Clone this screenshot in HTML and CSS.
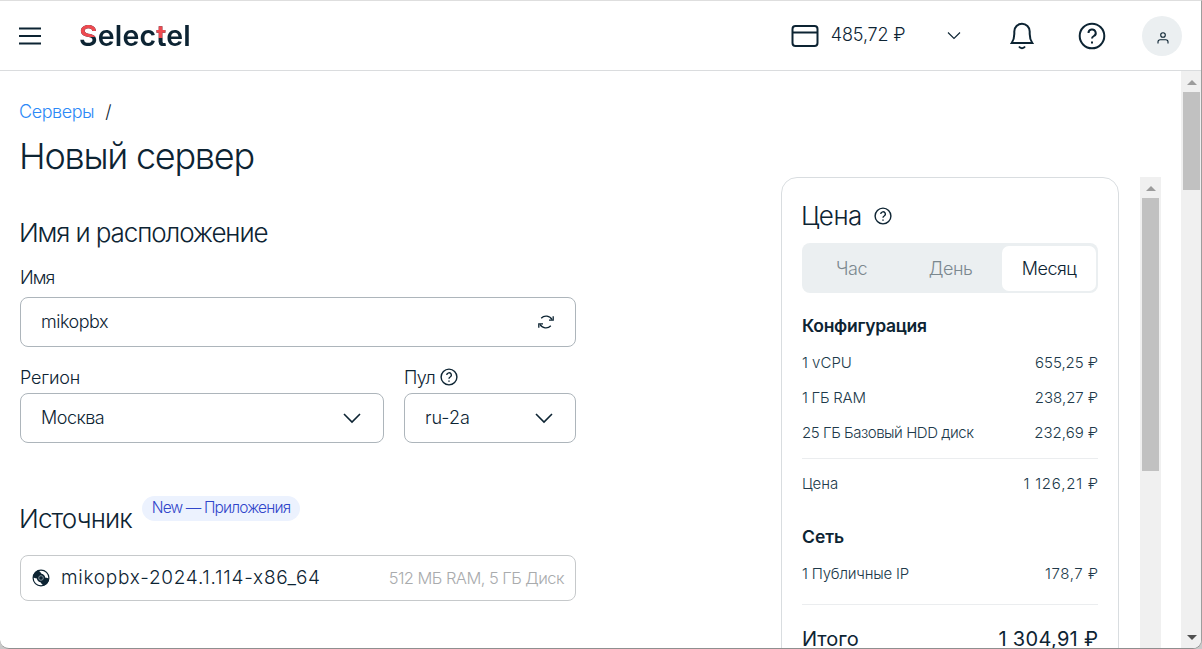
FILE: index.html
```html
<!DOCTYPE html>
<html lang="ru">
<head>
<meta charset="utf-8">
<title>Новый сервер</title>
<link rel="stylesheet" href="styles.css">
</head>
<body>
<svg width="0" height="0" class="defs">
  <symbol id="help" viewBox="0 0 28 28"><circle cx="14" cy="14" r="12.300"/><path d="M10.500 11a3.600 3.500 0 1 1 5.400 3c-1.300.8-1.900 1.300-1.900 2.600"/><path d="M14 19.600v1.900"/></symbol>
  <symbol id="chev" viewBox="0 0 18 12"><path d="M1 2l8 8 8-8"/></symbol>
</svg>
<div class="window">
  <header class="header">
    <svg class="menu" viewBox="0 0 22 18"><path d="M0 1.500h22M0 9h22M0 16.500h22"/></svg>
    <div class="logo">Selec<span class="logo-t">t</span>el</div>
    <div class="balance">
      <svg class="card-icon" viewBox="0 0 28 24"><rect x="1.500" y="2" width="25" height="20" rx="3"/><path d="M1.500 8.500h25"/></svg>
      <span class="sum">485,72 ₽</span>
      <svg class="chev-sm"><use href="#chev"/></svg>
    </div>
    <svg class="bell" viewBox="0 0 24 28"><path d="M4.300 12V9.500a7.700 7.700 0 0 1 15.400 0V12c0 3.500.6 6 2.600 9H1.700c2-3 2.600-5.500 2.600-9z"/><path class="clapper" d="M9 24.500c1.500 2.200 4.500 2.200 6 0"/></svg>
    <svg class="help-lg"><use href="#help"/></svg>
    <div class="avatar"><svg viewBox="0 0 12 12"><circle cx="6" cy="3" r="2.300"/><path d="M1 11.500V9.800Q1 7.700 3.200 7.700H8.800Q11 7.700 11 9.800V11.500"/></svg></div>
  </header>
  <div class="body">
    <main class="main">
      <nav class="crumbs"><a>Серверы</a><span>/</span></nav>
      <h1>Новый сервер</h1>
      <div class="columns">
        <section class="form">
          <h2 class="h-place">Имя и расположение</h2>
          <label class="lbl-name">Имя</label>
          <div class="field">
            <span class="v-name">mikopbx</span>
            <svg class="refresh" viewBox="0 0 16 14"><path d="M3.200 3.200A6.600 6.200 0 0 1 14 4.600M12.800 10.800A6.600 6.200 0 0 1 2 9.400"/><path d="M15.200 1.200v4h-4.200M.8 12.800v-4H5"/></svg>
          </div>
          <div class="selects">
            <div class="region">
              <label class="lbl-region">Регион</label>
              <div class="field"><span class="v-region">Москва</span><svg class="chev"><use href="#chev"/></svg></div>
            </div>
            <div class="pool">
              <label class="lbl-pool">Пул<svg class="help-sm"><use href="#help"/></svg></label>
              <div class="field"><span class="v-pool">ru-2a</span><svg class="chev"><use href="#chev"/></svg></div>
            </div>
          </div>
          <div class="source-head"><h2 class="h-source">Источник</h2><span class="badge">New — Приложения</span></div>
          <div class="source">
            <svg class="disc" viewBox="0 0 18 18"><circle class="rim" cx="9" cy="9" r="7.900"/><path d="M1 8.500A8 8 0 0 1 6.500 1.300L9.500 4.500 4.500 9.500zM17 9.500a8 8 0 0 1-5.500 7.200L8.500 13.500l5-5z"/><circle cx="9" cy="9" r="4.200"/><circle class="ring" cx="9" cy="9" r="2.300"/></svg>
            <span class="v-source">mikopbx-2024.1.114-x86_64</span>
            <span class="spec">512 МБ RAM, 5 ГБ Диск</span>
          </div>
        </section>
        <aside class="price">
          <div class="price-head"><h2>Цена</h2><svg class="help-sm"><use href="#help"/></svg></div>
          <div class="tabs"><span>Час</span><span>День</span><span class="active">Месяц</span></div>
          <h3 class="h-conf">Конфигурация</h3>
          <div class="row"><span class="i-cpu">1 vCPU</span><b>655,25 ₽</b></div>
          <div class="row"><span class="i-ram">1 ГБ RAM</span><b>238,27 ₽</b></div>
          <div class="row"><span class="i-disk">25 ГБ Базовый HDD диск</span><b>232,69 ₽</b></div>
          <div class="row subtotal"><span>Цена</span><b class="wide">1 126,21 ₽</b></div>
          <h3 class="h-net">Сеть</h3>
          <div class="row"><span class="i-ip">1 Публичные IP</span><b class="ip-sum">178,7 ₽</b></div>
          <div class="total"><span>Итого</span><b>1 304,91 ₽</b></div>
        </aside>
        <div class="scroll inner"><i class="up"></i><div class="thumb"></div></div>
      </div>
    </main>
    <div class="scroll outer"><i class="up"></i><div class="thumb"></div><i class="down"></i></div>
  </div>
</div>
</body>
</html>
```
FILE: styles.css
```css
* { box-sizing: border-box; }
body { margin: 0; background: #c9c9c9; font-family: Inter, "Open Sans", sans-serif; font-weight: 300; color: #0d2433; overflow: hidden; }
h1, h2, h3 { margin: 0; font-weight: 300; white-space: nowrap; }
span, b, a, label { white-space: nowrap; }
b { font-weight: 300; }
svg { flex: none; fill: none; stroke: #0d2433; stroke-width: 2; display: block; }
.defs { position: absolute; }
.window { width: 1202px; height: 649px; background: #fff; border-top: 1px solid #dedede; border-right: 1px solid #9d9d9d; border-bottom: 1px solid #8f8f8f; border-radius: 0 0 9px 9px; overflow: hidden; display: flex; flex-direction: column; }

.header { flex: none; height: 70px; border-bottom: 1px solid #dadcde; display: flex; align-items: center; padding: 0 19px 0 19px; }
.menu { width: 22px; height: 18px; stroke-width: 2; }
.logo { margin-left: 38px; width: 113px; font-size: 28.5px; font-weight: 600; letter-spacing: .2px; line-height: 30px; padding-top: 1px; color: transparent; -webkit-background-clip: text; background-clip: text; background-image: linear-gradient(168deg, transparent 62%, #fff 62% 67%, transparent 67%), linear-gradient(#ee4a50 0 0), linear-gradient(#0d2433, #0d2433); background-size: 0 0, 18px 17px, 100% 100%; background-repeat: no-repeat; }
.logo-t { background: linear-gradient(#ee4a50 57%, #0d2433 57%); -webkit-background-clip: text; background-clip: text; }
.balance { margin-left: 599px; display: flex; align-items: center; width: 171px; }
.card-icon { width: 28px; height: 24px; }
.sum { margin-left: 12px; width: 116px; font-size: 18px; line-height: 22px; letter-spacing: -.1px; padding-bottom: 2px; }
.chev-sm { width: 14px; height: 9px; stroke-width: 1.5; }
.bell { margin-left: 49px; width: 24px; height: 28px; }
.help-lg { margin-left: 44px; width: 28px; height: 28px; }
.avatar { margin-left: 36px; width: 40px; height: 40px; border-radius: 50%; background: #ebeff1; display: grid; place-items: center; }
.avatar svg { width: 12px; height: 12px; stroke-width: 1.1; margin-top: 4px; margin-left: 1px; }

.body { flex: 1; min-height: 0; display: flex; }
.main { width: 1181px; padding: 30px 20px 0; }
.crumbs { display: flex; gap: 11px; font-size: 18px; line-height: 22px; margin-left: -1px; }
.crumbs a { color: #2c89f7; letter-spacing: -.45px; }
h1 { font-size: 36px; line-height: 43px; margin: 12px 0 -1px -1px; letter-spacing: -1.25px; }
.columns { display: flex; height: 472px; }
.form { width: 556px; padding-top: 40px; }
h2 { font-size: 26px; line-height: 32px; }
.h-place { margin-left: -1px; letter-spacing: -1.12px; }
.price-head h2 { letter-spacing: -.5px; margin-left: -1px; }
label { display: flex; align-items: center; gap: 5px; font-size: 18px; line-height: 22px; }
.lbl-name { margin-top: 18px; letter-spacing: -1px; }
.lbl-region { letter-spacing: -.2px; }
.lbl-pool { letter-spacing: -.6px; }
.field { height: 50px; border: 1px solid #adb5bb; border-radius: 8px; display: flex; align-items: center; justify-content: space-between; padding: 0 22px 0 20px; font-size: 18px; line-height: 22px; letter-spacing: -.5px; }
.v-pool { letter-spacing: 0; }
.lbl-name + .field { margin-top: 8px; padding: 0 21px 0 20px; }
.refresh { width: 16px; height: 14px; stroke-width: 1.3; }
.selects { display: flex; gap: 20px; margin-top: 20px; }
.region { width: 364px; }
.pool { width: 172px; }
.selects .field { margin-top: 4px; }
.chev { width: 18px; height: 12px; stroke-width: 1.6; }
.help-sm { width: 18px; height: 18px; stroke-width: 2.2; }
.lbl-pool .help-sm { margin-bottom: 2px; }
.source-head { display: flex; align-items: flex-start; gap: 10px; margin-top: 53px; height: 47px; }
.h-source { padding-top: 7px; letter-spacing: -.85px; margin-left: -1px; }
.badge { height: 25px; width: 158px; border-radius: 13px; background: #ecf2fe; color: #3046ca; font-size: 15.5px; letter-spacing: -.85px; line-height: 24px; text-align: center; }
.source { margin-top: 12px; height: 46px; border: 1px solid #c6c9cb; border-radius: 8px; display: flex; align-items: center; padding: 0 11px 1px 11px; }
.disc { width: 18px; height: 18px; stroke: none; fill: #0d2433; }
.rim { fill: none; stroke: #0d2433; stroke-width: 1.2; }
.ring { fill: #0d2433; stroke: #8f9ba3; stroke-width: .9; }
.v-source { margin-left: 11px; font-size: 19px; letter-spacing: .74px; }
.spec { margin-left: auto; font-size: 16.5px; letter-spacing: -.55px; color: #a9abad; }

.price { margin-left: 205px; width: 338px; height: 520px; border: 1px solid #d9dde0; border-radius: 16px; padding: 22px 20px 0; }
.price-head { display: flex; align-items: center; gap: 12px; height: 32px; }
.tabs { margin-top: 11px; height: 50px; border-radius: 8px; background: #ebeff1; display: grid; grid-template-columns: 95px 103px 94px; padding: 3px 2px; font-size: 18px; letter-spacing: -.45px; line-height: 45px; text-align: center; color: #7b888f; }
.tabs .active { background: #fff; border-radius: 7px; color: #0d2433; }
h3 { font-size: 17.5px; font-weight: 600; line-height: 22px; }
.h-conf { margin: 22px 0 8px; letter-spacing: -.3px; }
.row { display: flex; justify-content: space-between; font-size: 15px; line-height: 35px; height: 35px; color: #20394a; }
.i-ram { letter-spacing: -.25px; }
.i-disk { letter-spacing: -.46px; }
.i-ip { letter-spacing: -.2px; }
.wide { letter-spacing: .8px; margin-right: -.8px; }
.ip-sum { letter-spacing: .55px; margin-right: -.55px; }
.subtotal { margin-top: 8px; border-top: 1px solid #ebedef; height: 50px; line-height: 49px; }
.h-net { margin: 18px 0 8px; }
.total { margin-top: 13px; border-top: 1px solid #ebedef; display: flex; justify-content: space-between; font-size: 20px; line-height: 18px; padding-top: 25px; }
.total span, .total b { font-weight: 400; }
.total b { letter-spacing: .3px; margin-right: -.3px; }

.scroll { background: #f0f0f0; display: flex; flex-direction: column; align-items: center; width: 21px; }
.scroll i { width: 0; height: 0; border: 5px solid transparent; border-top: 0; border-bottom-color: #9c9c9c; }
.thumb { width: 17px; background: #c1c1c1; }
.inner { margin-left: 21px; }
.inner .up { margin-top: 9px; }
.inner .thumb { height: 273px; margin-top: 7px; }
.outer { width: 20px; padding-left: 1px; }
.outer .up { margin-top: 9px; }
.outer .thumb { height: 98px; margin-top: 7px; }
.scroll .down { margin: auto 0 8px; border: 5px solid transparent; border-bottom: 0; border-top-color: #505050; }
```
